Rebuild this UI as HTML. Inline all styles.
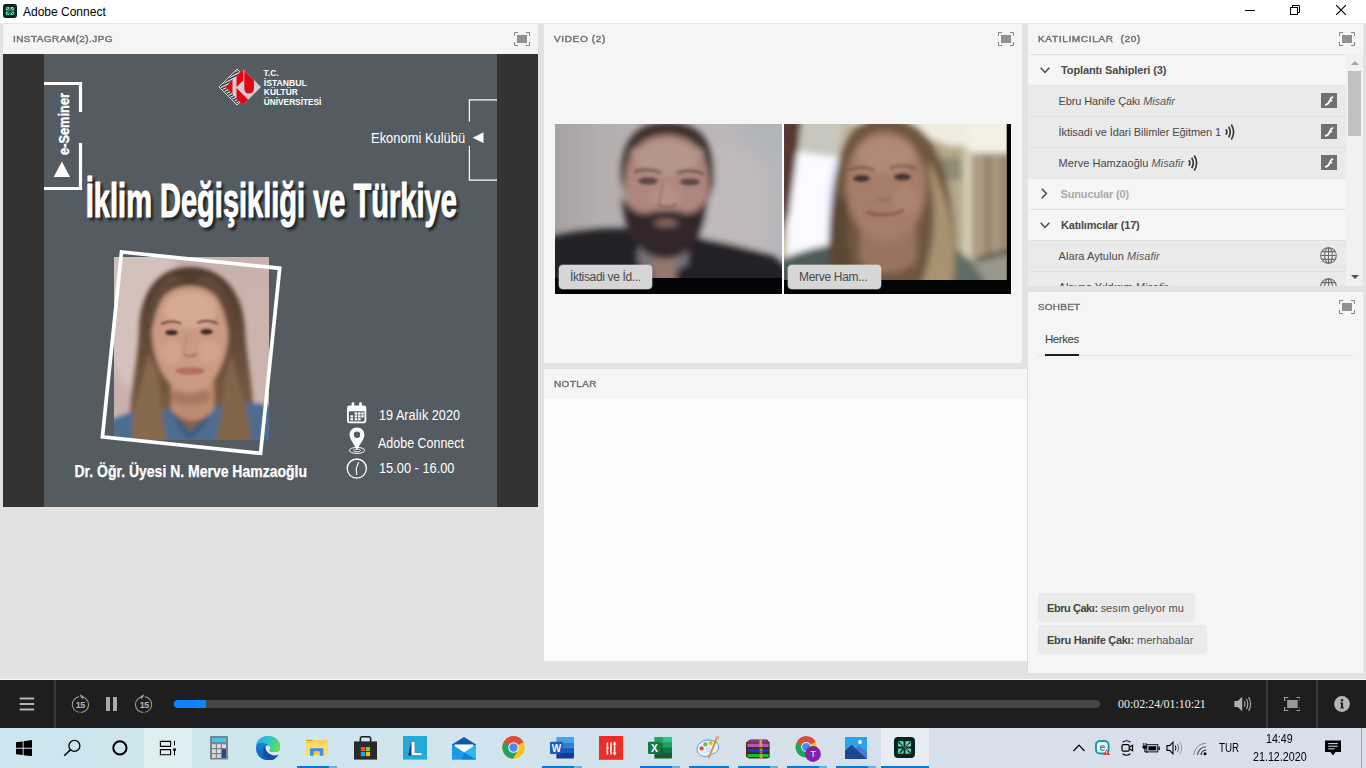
<!DOCTYPE html>
<html lang="tr">
<head>
<meta charset="utf-8">
<title>Adobe Connect</title>
<style>
*{box-sizing:border-box;margin:0;padding:0}
html,body{width:1366px;height:768px;overflow:hidden}
body{position:relative;background:#e2e2e2;font-family:"Liberation Sans",sans-serif;font-size:12px;color:#444}
.abs{position:absolute}
.t{position:absolute;white-space:nowrap;line-height:1;transform-origin:0 0}
#titlebar{left:0;top:0;width:1366px;height:23px;background:#fff}
#tbline{left:0;top:23px;width:1366px;height:1px;background:#e6e6e6}
.pod{position:absolute;background:#f5f5f5;overflow:hidden}
.ph{position:absolute;white-space:nowrap;line-height:1;font-size:10px;font-weight:normal;letter-spacing:1px;color:#747474;-webkit-text-stroke:.5px #727272;transform-origin:0 8.5px;transform:scaleY(.875)}
.fs{position:absolute;width:16px;height:14px}
/* share pod */
#share{left:3px;top:24px;width:535px;height:483px}
#stage{left:0;top:30px;width:535px;height:453px;background:#333}
#slide{left:41px;top:0;width:453px;height:453px;background:#555c61;overflow:hidden}
.w{color:#fff}
/* video pod */
#video{left:544px;top:24px;width:478px;height:339px}
.vid{position:absolute;top:100px;height:170px;background:#000;overflow:hidden}
.vlabel{position:absolute;height:24px;top:141px;background:#d6d6d6;border-radius:4px;box-shadow:0 0 0 1px rgba(255,255,255,.25)}
/* notes */
#notes{left:544px;top:369px;width:483px;height:292px;background:#fbfbfb}
#noteshead{left:0;top:0;width:483px;height:30px;background:#f5f5f5}
/* attendees */
#att{left:1028px;top:24px;width:335px;height:262px}
.row{position:absolute;left:0;width:318px;height:31px;border-top:1px solid transparent}
.row::before{content:"";position:absolute;left:2px;right:0;top:-1px;height:1px;background:#e1e1e1}
.row.u{background:#eaeaea}
.flash{position:absolute;left:293px;top:7px}
.gt{font-size:11px;font-weight:bold;color:#4a4a4a}
.ut{font-size:11px;color:#484848}
.ut i{color:#5a5a5a}
.ct{font-size:11px;color:#505050}
.ct b{color:#444}
/* chat */
#chat{left:1028px;top:292px;width:335px;height:381px}
.bub{position:absolute;left:10px;height:29px;background:#eaeaea;border-radius:4px}
/* player bar */
#pwhite{left:0;top:679px;width:1366px;height:1px;background:#fafafa}
#player{left:0;top:680px;width:1366px;height:48px;background:#1e1e1e}
.vsep{position:absolute;top:0;width:2px;height:48px;background:#383838}
/* taskbar */
#taskbar{left:0;top:728px;width:1366px;height:40px;background:linear-gradient(90deg,#cde5ec 0,#d0e5ed 25%,#d3e2ec 45%,#d6e0eb 62%,#dadfea 100%)}
.ul{position:absolute;top:38px;height:2px;background:#0a78d4}
.ul i{position:absolute;right:0;top:0;width:8px;height:2px;background:#6aaee6}
.ti{position:absolute;top:0;width:48px;height:40px}
</style>
</head>
<body>
<!-- TITLE BAR -->
<div id="titlebar" class="abs">
  <svg class="abs" style="left:3px;top:4px" width="14" height="14" viewBox="0 0 14 14"><rect width="14" height="14" rx="2.4" fill="#05251e"/><rect x="2.8" y="3" width="3.6" height="3.4" fill="#6fe3bd"/><rect x="7.6" y="3" width="3.6" height="3.4" fill="#7be8c4"/><rect x="2.8" y="7.6" width="3.6" height="3.5" fill="#4fd9ad"/><rect x="7.6" y="7.6" width="3.6" height="3.5" fill="#66e0b8"/><path d="M3 3.4L7 7L11 3.4M7 7L11 10.8M7 7Q5.2 8.8 4 10.6" stroke="#05251e" stroke-width=".9" fill="none"/><path d="M4.4 4.8L7 7L9.6 4.8" stroke="#c7f0e0" stroke-width=".4" fill="none"/></svg>
  <span id="ttl" class="t" style="left:23px;top:6px;font-size:12px;color:#000">Adobe Connect</span>
  <svg class="abs" style="left:1245px;top:10px" width="10" height="1"><rect width="10" height="1" fill="#000"/></svg>
  <svg class="abs" style="left:1290px;top:5px" width="10" height="10" viewBox="0 0 10 10"><path d="M2.5 2.5V.5H9.5V7.5H7.5" fill="none" stroke="#000"/><rect x=".5" y="2.5" width="7" height="7" fill="none" stroke="#000"/></svg>
  <svg class="abs" style="left:1336px;top:5px" width="10" height="10" viewBox="0 0 10 10"><path d="M0 0L10 10M10 0L0 10" stroke="#000" stroke-width="1.1"/></svg>
</div>
<div id="tbline" class="abs"></div>

<!-- SHARE POD -->
<div id="share" class="pod">
  <span id="h1" class="ph" style="left:10px;top:10px;letter-spacing:0.43px">INSTAGRAM(2).JPG</span>
  <svg class="fs" style="left:511px;top:8px" width="16" height="14" viewBox="0 0 16 14"><path d="M.5 4V.5H4M12 .5H15.5V4M15.5 10V13.5H12M4 13.5H.5V10" stroke="#858585" fill="none"/><rect x="3" y="3" width="10" height="8" fill="#919191"/></svg>
  <div id="stage" class="abs"><div id="slide" class="abs">
<svg class="abs" style="left:0;top:0" width="453" height="453" viewBox="0 0 453 453" font-family="'Liberation Sans',sans-serif">
<defs>
<filter id="b1" x="-20%" y="-20%" width="140%" height="140%"><feGaussianBlur stdDeviation="1"/></filter>
<filter id="b2" x="-20%" y="-20%" width="140%" height="140%"><feGaussianBlur stdDeviation="2.2"/></filter>
<filter id="b4" x="-20%" y="-20%" width="140%" height="140%"><feGaussianBlur stdDeviation="3"/></filter>
<linearGradient id="hairg" x1="0" y1="0" x2="0" y2="1"><stop offset="0" stop-color="#4f3a2d"/><stop offset=".45" stop-color="#654b38"/><stop offset="1" stop-color="#86684a"/></linearGradient>
<clipPath id="lgc"><path d="M193 16L210 33L193 50L176 33Z"/></clipPath>
<clipPath id="pc"><rect x="70" y="203" width="155" height="183"/></clipPath>
</defs>
<!-- left bracket -->
<path d="M0 29.5H36.5V58M36.5 89V134.5H0" fill="none" stroke="#fff" stroke-width="3.2"/>
<text id="esem" transform="translate(24.6 101) rotate(-90)" font-size="15.5" font-weight="bold" fill="#fff" stroke="#fff" stroke-width=".45" textLength="62" lengthAdjust="spacingAndGlyphs">e-Seminer</text>
<path d="M9.7 123H26L17.9 107.5Z" fill="#fff"/>
<!-- logo -->
<g id="logo">
<path d="M193 15L211 33L193 51L175 33Z" fill="#2e3236" stroke="#e6e6e6" stroke-width=".9"/>
<path d="M174 20.5L200 7.5M174 23.4L200 10.4M174 26.3L200 13.3M174 29.2L200 16.2M174 32.1L200 19.1M174 35.0L200 22.0M174 37.9L200 24.9M174 40.8L200 27.8M174 43.7L200 30.7M174 46.6L200 33.6M174 49.5L200 36.5M174 52.4L200 39.4M174 55.3L200 42.3M174 58.2L200 45.2M174 61.1L200 48.1" stroke="#dedede" stroke-width="1.25" clip-path="url(#lgc)"/>
<path d="M199.2 15.2L217 33L199.2 50.8L181.4 33Z" fill="#d0d0d0"/>
<path d="M181.6 33L188.5 26.1V39.9Z" fill="#e30613"/>
<path d="M192.5 22.1L199.2 15.2L199.4 15.4V26.2L192.5 33Z" fill="#e30613"/>
<path d="M200.3 16.4L209.9 26.1V34.8A4.8 4.8 0 0 1 200.3 34.8Z" fill="#e30613"/>
<path d="M192.5 34L204.2 45.7L199.2 50.8L192.5 44.7Z" fill="#e30613"/>
</g>
<g font-weight="bold" fill="#fff" font-size="8.6">
<text x="219.6" y="21.7" textLength="15" lengthAdjust="spacingAndGlyphs">T.C.</text>
<text x="219.8" y="31.9" textLength="43" lengthAdjust="spacingAndGlyphs">İSTANBUL</text>
<text x="219.8" y="41.2" textLength="34" lengthAdjust="spacingAndGlyphs">KÜLTÜR</text>
<text x="219.8" y="50.8" textLength="57.6" lengthAdjust="spacingAndGlyphs">ÜNİVERSİTESİ</text>
</g>
<!-- right bracket -->
<path d="M453 45.9H425.4V67.5M425.4 92V126.1H453" fill="none" stroke="#fff" stroke-width="1.2"/>
<text x="327" y="89.4" font-size="15" fill="#fff" textLength="94.2" lengthAdjust="spacingAndGlyphs">Ekonomi Kulübü</text>
<path d="M439.5 78.3V89.1L428.6 83.7Z" fill="#fff"/>
<!-- title -->
<text x="44.4" y="166" font-size="48.4" font-weight="bold" fill="#1c2023" stroke="#1c2023" stroke-width="1.1" opacity=".9" filter="url(#b1)" textLength="371" lengthAdjust="spacingAndGlyphs">İklim Değişikliği ve Türkiye</text>
<text id="stitle" x="41.8" y="163.2" font-size="48.4" font-weight="bold" fill="#fff" stroke="#fff" stroke-width="1.1" stroke-linejoin="round" textLength="371" lengthAdjust="spacingAndGlyphs">İklim Değişikliği ve Türkiye</text>
<!-- photo -->
<g clip-path="url(#pc)">
<rect x="70" y="203" width="155" height="183" fill="#c9b2ad"/>
<g filter="url(#b4)">
<ellipse cx="100" cy="260" rx="40" ry="80" fill="#d3c1bc"/>
<ellipse cx="212" cy="300" rx="20" ry="70" fill="#cbb3ae"/>
</g>
<g filter="url(#b2)">
<!-- hair back -->
<path d="M146 213C112 213 96 240 95 276C94 312 83 345 86 392H209C213 345 203 312 201 276C200 240 180 213 146 213Z" fill="url(#hairg)"/>
<!-- shirt -->
<path d="M66 366Q100 352 128 356L146 378L170 352Q200 346 229 352V392H66Z" fill="#4d6c91"/>
<path d="M128 356L146 378L170 352L160 372L146 386L134 374Z" fill="#3f5a7c"/>
<!-- neck -->
<path d="M127 318H170V356Q148 378 127 356Z" fill="#bd8b72"/>
<ellipse cx="147" cy="343" rx="20" ry="8" fill="#a87860"/>
<!-- face -->
<path d="M146 232C119 232 107 255 108 281C109 311 126 339 146 339C167 339 183 311 184 281C185 255 173 232 146 232Z" fill="#cb9a82"/>
<ellipse cx="146" cy="256" rx="26" ry="18" fill="#d6aa92"/>
<ellipse cx="128" cy="298" rx="11" ry="12" fill="#d2a28a"/><ellipse cx="165" cy="298" rx="11" ry="12" fill="#d2a28a"/>
<!-- hairline strands -->
<path d="M141 226C122 232 110 252 107 286C100 270 104 236 128 220Z" fill="#60483a"/>
<path d="M150 226C170 232 182 252 185 286C192 270 188 236 164 220Z" fill="#60483a"/>
<!-- front strands -->
<path d="M104 300C100 330 86 356 88 392H124C118 366 116 340 114 318Z" fill="#87694c"/>
<path d="M188 300C192 330 208 356 207 392H170C178 366 180 340 182 318Z" fill="#826549"/>
</g>
<g filter="url(#b1)">
<ellipse cx="127.5" cy="278.6" rx="6.2" ry="2.7" fill="#3e2a22"/>
<ellipse cx="162.5" cy="277.8" rx="6.2" ry="2.7" fill="#3e2a22"/>
<path d="M117 270Q127 265 137 269.5M153 269Q163 264.5 174 269.5" stroke="#5f4234" stroke-width="1.9" fill="none"/>
<ellipse cx="146" cy="317" rx="14.5" ry="3.8" fill="#b76d62"/>
<path d="M139 300Q146 304.5 153 300" stroke="#a36e5a" stroke-width="2" fill="none"/>
<path d="M143 280Q141 292 140 298" stroke="#bb8a73" stroke-width="1.6" fill="none"/>
</g>
</g>
<!-- frame -->
<rect x="67.6" y="205.6" width="159" height="186" fill="none" stroke="#fff" stroke-width="3.7" transform="rotate(5.9 147.1 298.1)"/>
<!-- name -->
<text x="30.5" y="422.6" font-size="16.5" font-weight="bold" fill="#fff" stroke="#fff" stroke-width=".25" textLength="232.5" lengthAdjust="spacingAndGlyphs">Dr. Öğr. Üyesi N. Merve Hamzaoğlu</text>
<!-- info -->
<g font-size="15" fill="#fff">
<text x="335" y="366" textLength="81" lengthAdjust="spacingAndGlyphs">19 Aralık 2020</text>
<text x="334" y="393.6" textLength="86" lengthAdjust="spacingAndGlyphs">Adobe Connect</text>
<text x="335" y="418.6" textLength="75.5" lengthAdjust="spacingAndGlyphs">15.00 - 16.00</text>
</g>
<!-- calendar icon -->
<g fill="#fff">
<rect x="303" y="351.5" width="19.3" height="17.7" rx="2.4"/>
<rect x="307.6" y="348.2" width="2.6" height="6" rx="1.2"/><rect x="315.2" y="348.2" width="2.6" height="6" rx="1.2"/>
</g>
<rect x="304.8" y="357.2" width="15.7" height="10.2" rx="1" fill="#555c61"/>
<g fill="#fff"><rect x="310.6" y="358.4" width="2.6" height="2.2"/><rect x="314" y="358.4" width="2.6" height="2.2"/><rect x="317.3" y="358.4" width="2.4" height="2.2"/>
<rect x="306.4" y="361.3" width="2.6" height="2.2"/><rect x="310.6" y="361.3" width="2.6" height="2.2"/><rect x="314" y="361.3" width="2.6" height="2.2"/><rect x="317.3" y="361.3" width="2.4" height="2.2"/>
<rect x="306.4" y="364.2" width="2.6" height="2.2"/><rect x="310.6" y="364.2" width="2.6" height="2.2"/><rect x="314" y="364.2" width="2.6" height="2.2"/></g>
<!-- pin icon -->
<ellipse cx="313" cy="396.4" rx="7.6" ry="3" fill="none" stroke="#fff" stroke-width="1"/>
<ellipse cx="313" cy="396.4" rx="3.6" ry="1.3" fill="none" stroke="#fff" stroke-width=".8"/>
<path d="M313 373.6C308.4 373.6 305.6 377 305.6 380.8C305.6 385.5 310.5 390.5 313 396.2C315.5 390.5 320.4 385.5 320.4 380.8C320.4 377 317.6 373.6 313 373.6ZM313 377.6A3.2 3.2 0 1 1 313 384A3.2 3.2 0 1 1 313 377.6Z" fill="#fff" fill-rule="evenodd"/>
<!-- clock icon -->
<circle cx="312.8" cy="414.6" r="9.6" fill="none" stroke="#fff" stroke-width="1.3"/>
<path d="M314.6 408L312.2 414.8L312.8 421" fill="none" stroke="#fff" stroke-width="1.1"/>
</svg>
</div></div>
</div>

<!-- VIDEO POD -->
<div id="video" class="pod">
  <span id="h2" class="ph" style="left:10px;top:10px;letter-spacing:0.65px">VIDEO (2)</span>
  <svg class="fs" style="left:454px;top:8px" width="16" height="14" viewBox="0 0 16 14"><path d="M.5 4V.5H4M12 .5H15.5V4M15.5 10V13.5H12M4 13.5H.5V10" stroke="#858585" fill="none"/><rect x="3" y="3" width="10" height="8" fill="#919191"/></svg>
  <div class="vid" style="left:11px;width:227px">
  <svg class="abs" style="left:0;top:0" width="227" height="170" viewBox="555 124 227 170">
  <defs><filter id="v3" x="-20%" y="-20%" width="140%" height="140%"><feGaussianBlur stdDeviation="3"/></filter><filter id="v9" x="-50%" y="-50%" width="200%" height="200%"><feGaussianBlur stdDeviation="9"/></filter><filter id="v15" x="-20%" y="-20%" width="140%" height="140%"><feGaussianBlur stdDeviation="1.6"/></filter>
  <linearGradient id="wall1" x1="0" x2="1" y1="0" y2="0"><stop offset="0" stop-color="#a7a1a1"/><stop offset=".2" stop-color="#b4aeae"/><stop offset=".7" stop-color="#bdb7b8"/><stop offset="1" stop-color="#b6b6bb"/></linearGradient>
  <clipPath id="c1"><rect x="555" y="124" width="227" height="154"/></clipPath></defs>
  <rect x="555" y="124" width="227" height="170" fill="#050508"/>
  <g clip-path="url(#c1)">
  <rect x="555" y="124" width="227" height="155" fill="url(#wall1)"/>
  <g filter="url(#v3)">
  <g filter="url(#v9)"><ellipse cx="735" cy="205" rx="34" ry="60" fill="#c1baba"/>
  <ellipse cx="775" cy="128" rx="40" ry="30" fill="#b0b5ba"/></g>
  <!-- shirt -->
  <path d="M545 238Q580 228 622 228L700 238Q740 244 774 256L790 270V290H545Z" fill="#232428"/>
  <!-- collar / tee -->
  <path d="M638 246H688V264Q662 282 638 264Z" fill="#77737a"/>
  <path d="M652 250H676V282H652Z" fill="#94786f"/>
  <!-- hair -->
  <path d="M667 122C630 122 620 148 621 180L626 196L631 150Q667 130 703 150L709 200L714 184C716 148 706 122 667 122Z" fill="#3a2e2b"/>
  <!-- face -->
  <path d="M667 135C638 135 625 156 625 186C627 216 643 240 667 242C691 240 707 216 709 186C709 156 696 135 667 135Z" fill="#ad877d"/>
  <ellipse cx="667" cy="158" rx="31" ry="17" fill="#b8958a"/>
  <ellipse cx="666" cy="198" rx="14" ry="13" fill="#b79085"/>
  <!-- beard -->
  <path d="M622 194C622 238 644 259 665 259C688 259 707 238 708 194C704 208 694 215 684 213C678 209 655 209 649 213C638 215 627 208 622 194Z" fill="#30262a"/>
  <ellipse cx="666" cy="223" rx="12" ry="3.6" fill="#8f6c66"/>
  </g>
  <g filter="url(#v15)">
  <ellipse cx="648" cy="181" rx="10" ry="3.4" fill="#5c4846"/><ellipse cx="690" cy="182" rx="10" ry="3.4" fill="#5c4846"/>
  <path d="M634 172Q648 167 661 173M677 173Q690 168 704 174" stroke="#4a3a3890" stroke-width="3" fill="none"/>
  <path d="M657 204Q666 211 677 204" stroke="#8a675f" stroke-width="2.6" fill="none"/>
  <path d="M663 182Q660 198 659 204" stroke="#9a776c" stroke-width="2" fill="none"/>
  </g>
  </g>
  </svg>
  <div class="vlabel" style="left:4px;width:93px"><span id="vl1" class="t" style="left:11px;top:6px;font-size:12px;letter-spacing:-.35px;color:#4a4a4a">İktisadi ve İd...</span></div>
  </div>
  <div class="vid" style="left:240px;width:227px">
  <svg class="abs" style="left:0;top:0" width="227" height="170" viewBox="784 124 227 170">
  <defs><clipPath id="c2"><rect x="784" y="124" width="222.5" height="156"/></clipPath>
  <linearGradient id="cur" x1="0" x2="1" y1="0" y2="0"><stop offset="0" stop-color="#9d8a74"/><stop offset=".2" stop-color="#b5a48c"/><stop offset=".4" stop-color="#8f7b66"/><stop offset=".6" stop-color="#b3a188"/><stop offset=".8" stop-color="#927e69"/><stop offset="1" stop-color="#ac9a82"/></linearGradient></defs>
  <rect x="784" y="124" width="227" height="170" fill="#040404"/>
  <g clip-path="url(#c2)">
  <rect x="784" y="124" width="223" height="157" fill="#bdb197"/>
  <g filter="url(#v3)">
  <!-- top wall / ceiling -->
  <path d="M800 118H1012V150L968 152L940 142L900 126Z" fill="#efecdf"/>
  <rect x="968" y="118" width="44" height="36" fill="#f3f1e6"/>
  <!-- alcove -->
  <rect x="934" y="146" width="32" height="110" fill="#b4a98b"/>
  <rect x="940" y="158" width="22" height="22" fill="#8f8a74"/>
  <rect x="963" y="150" width="9" height="108" fill="#d6ceb6"/>
  <!-- curtain -->
  <rect x="972" y="153" width="40" height="103" fill="url(#cur)"/>
  <!-- sofa -->
  <path d="M975 258L1012 250V290H975Z" fill="#97978a"/>
  <path d="M975 260L1012 251" stroke="#4a4038" stroke-width="4"/>
  <!-- window frame + wall left-top -->
  <path d="M800 118H846L836 160H800Z" fill="#c8c7be"/>
  <!-- window -->
  <path d="M789 156H835V248L786 262Z" fill="#fdfdff"/>
  <path d="M790 150L838 158V252L786 262Z" fill="#fbfbff"/>
  <ellipse cx="836" cy="205" rx="9" ry="46" fill="#e8ecff"/>
  <!-- dark band left -->
  <path d="M778 118H802L789 214L778 250Z" fill="#573830"/>
  <!-- shirt -->
  <path d="M778 262Q800 248 850 242H925Q958 246 972 262L990 290H778Z" fill="#5d6d66"/>
  <path d="M778 262Q800 250 830 246V290H778Z" fill="#4e5c58"/>
  <!-- hair -->
  <path d="M882 116C850 118 838 150 832 196C828 236 826 262 834 288H952C958 262 956 236 952 208C946 160 930 116 882 116Z" fill="#705741"/>
  <path d="M928 160C948 196 960 240 952 288H920C934 252 938 212 930 180Z" fill="#a8936f"/>
  <path d="M834 196C828 230 826 262 834 288H858C848 262 846 230 848 200Z" fill="#5c4635"/>
  <!-- neck -->
  <path d="M860 226H916V262Q888 284 860 262Z" fill="#997560"/>
  <!-- face -->
  <path d="M884 132C858 132 845 160 846 190C848 220 864 241 886 241C908 241 924 220 926 190C927 160 912 132 884 132Z" fill="#a57d67"/>
  <ellipse cx="886" cy="156" rx="28" ry="18" fill="#b08a73"/>
  <ellipse cx="905" cy="200" rx="12" ry="14" fill="#ae866f"/>
  </g>
  <g filter="url(#v15)">
  <ellipse cx="861.5" cy="178.5" rx="8.4" ry="3.3" fill="#43332f"/><ellipse cx="902.5" cy="177" rx="8.4" ry="3.3" fill="#43332f"/>
  <path d="M849 170Q861 164.5 874 170M890 168Q902 163 916 169" stroke="#5a433a90" stroke-width="2.6" fill="none"/>
  <path d="M866 212Q884 219 904 210" stroke="#8e584e" stroke-width="3" fill="none"/>
  <path d="M877 198Q884 202.5 892 198" stroke="#93695a" stroke-width="2.2" fill="none"/>
  </g>
  </g>
  </svg>
  <div class="vlabel" style="left:4px;width:93px"><span id="vl2" class="t" style="left:11px;top:6px;font-size:12px;letter-spacing:-.3px;color:#4a4a4a">Merve Ham...</span></div>
  </div>
  <div class="abs" style="left:238px;top:100px;width:2px;height:170px;background:#fdfdfd"></div>

</div>

<!-- NOTES POD -->
<div id="notes" class="pod"><div id="noteshead" class="abs"></div>
  <span id="h3" class="ph" style="left:10px;top:10px;letter-spacing:0.4px">NOTLAR</span></div>
<div class="abs" style="left:1027px;top:369px;width:1px;height:304px;background:#dcdcdc"></div>

<!-- ATTENDEES POD -->
<div id="att" class="pod">
  <span id="h4" class="ph" style="left:10px;top:10px;letter-spacing:0.67px">KATILIMCILAR&nbsp; (20)</span>
  <svg class="fs" style="left:311px;top:8px" width="16" height="14" viewBox="0 0 16 14"><path d="M.5 4V.5H4M12 .5H15.5V4M15.5 10V13.5H12M4 13.5H.5V10" stroke="#858585" fill="none"/><rect x="3" y="3" width="10" height="8" fill="#919191"/></svg>
  <div class="abs" style="left:0;top:30px;width:318px;height:232px;overflow:hidden">
    <div class="row" style="top:0"><svg class="abs" style="left:12px;top:12px" width="10" height="7" viewBox="0 0 10 7"><path d="M.7 .8L5 5.4L9.3 .8" fill="none" stroke="#4a4a4a" stroke-width="1.5"/></svg><span id="g1" class="t gt" style="left:33px;top:10px;letter-spacing:-0.12px">Toplantı Sahipleri (3)</span></div>
    <div class="row u" style="top:31px"><span id="u1" class="t ut" style="left:30.6px;top:10px;letter-spacing:-0.13px">Ebru Hanife Çakı <i>Misafir</i></span><svg class="flash" width="16" height="15" viewBox="0 0 16 15"><rect width="16" height="15" fill="#707070"/><path d="M3.8 11.2Q6.6 10.8 7.9 7.4Q9.4 3.4 12.3 3L12.1 4.9Q10.7 5.1 10 6.8H11.4L11.1 8.4H9.4Q7.9 12.3 4.1 12.7Z" fill="#fff"/></svg></div>
    <div class="row u" style="top:62px"><span id="u2" class="t ut" style="left:30.6px;top:10px;letter-spacing:-0.07px">İktisadi ve İdari Bilimler Eğitmen 1</span><svg class="abs" style="left:197px;top:7px" width="10" height="16" viewBox="0 0 10 16"><path d="M1 5.3Q2.7 8 1 10.7M3.7 2.8Q6.8 8 3.7 13.2M6.3 .5Q10.9 8 6.3 15.5" fill="none" stroke="#3a3a3a" stroke-width="1.7"/></svg><svg class="flash" width="16" height="15" viewBox="0 0 16 15"><rect width="16" height="15" fill="#707070"/><path d="M3.8 11.2Q6.6 10.8 7.9 7.4Q9.4 3.4 12.3 3L12.1 4.9Q10.7 5.1 10 6.8H11.4L11.1 8.4H9.4Q7.9 12.3 4.1 12.7Z" fill="#fff"/></svg></div>
    <div class="row u" style="top:93px"><span id="u3" class="t ut" style="left:30.6px;top:10px;letter-spacing:0.04px">Merve Hamzaoğlu <i>Misafir</i></span><svg class="abs" style="left:159.5px;top:7px" width="10" height="16" viewBox="0 0 10 16"><path d="M1 5.3Q2.7 8 1 10.7M3.7 2.8Q6.8 8 3.7 13.2M6.3 .5Q10.9 8 6.3 15.5" fill="none" stroke="#3a3a3a" stroke-width="1.7"/></svg><svg class="flash" width="16" height="15" viewBox="0 0 16 15"><rect width="16" height="15" fill="#707070"/><path d="M3.8 11.2Q6.6 10.8 7.9 7.4Q9.4 3.4 12.3 3L12.1 4.9Q10.7 5.1 10 6.8H11.4L11.1 8.4H9.4Q7.9 12.3 4.1 12.7Z" fill="#fff"/></svg></div>
    <div class="row" style="top:124px"><svg class="abs" style="left:13px;top:9px" width="7" height="11" viewBox="0 0 7 11"><path d="M.8 .7L5.4 5.5L.8 10.3" fill="none" stroke="#4a4a4a" stroke-width="1.5"/></svg><span id="g2" class="t gt" style="left:32.5px;top:10px;letter-spacing:-0.14px;color:#aaa">Sunucular (0)</span></div>
    <div class="row" style="top:155px"><svg class="abs" style="left:12px;top:12px" width="10" height="7" viewBox="0 0 10 7"><path d="M.7 .8L5 5.4L9.3 .8" fill="none" stroke="#4a4a4a" stroke-width="1.5"/></svg><span id="g3" class="t gt" style="left:33px;top:10px;letter-spacing:-0.2px">Katılımcılar (17)</span></div>
    <div class="row u" style="top:186px"><span id="u4" class="t ut" style="left:30.6px;top:10px;letter-spacing:0.05px">Alara Aytulun <i>Misafir</i></span><svg class="abs" style="left:292px;top:6px" width="17" height="17" viewBox="0 0 17 17"><g fill="none" stroke="#6c6c6c" stroke-width="1.1"><circle cx="8.5" cy="8.5" r="7.8"/><path d="M8.5 .7V16.3M.7 8.5H16.3M1.9 4.6H15.1M1.9 12.4H15.1"/><ellipse cx="8.5" cy="8.5" rx="3.9" ry="7.8"/></g></svg></div>
    <div class="row u" style="top:217px"><span id="u5" class="t ut" style="left:30.6px;top:10px;letter-spacing:-0.03px">Alayna Yıldırım <i>Misafir</i></span><svg class="abs" style="left:292px;top:6px" width="17" height="17" viewBox="0 0 17 17"><g fill="none" stroke="#6c6c6c" stroke-width="1.1"><circle cx="8.5" cy="8.5" r="7.8"/><path d="M8.5 .7V16.3M.7 8.5H16.3M1.9 4.6H15.1M1.9 12.4H15.1"/><ellipse cx="8.5" cy="8.5" rx="3.9" ry="7.8"/></g></svg></div>
  </div>
  <div class="abs" style="left:318px;top:30px;width:17px;height:232px;background:#f1f1f1">
    <svg class="abs" style="left:4.5px;top:7px" width="8" height="4" viewBox="0 0 8 4"><path d="M0 4L4 0L8 4Z" fill="#a3a3a3"/></svg>
    <div class="abs" style="left:2px;top:17px;width:13px;height:65px;background:#c1c1c1"></div>
    <svg class="abs" style="left:4.6px;top:221px" width="8" height="4" viewBox="0 0 8 4"><path d="M0 0H8L4 4Z" fill="#505050"/></svg>
  </div>

</div>

<!-- CHAT POD -->
<div id="chat" class="pod">
  <span id="h5" class="ph" style="left:10px;top:10px;letter-spacing:0.2px">SOHBET</span>
  <svg class="fs" style="left:311px;top:8px" width="16" height="14" viewBox="0 0 16 14"><path d="M.5 4V.5H4M12 .5H15.5V4M15.5 10V13.5H12M4 13.5H.5V10" stroke="#858585" fill="none"/><rect x="3" y="3" width="10" height="8" fill="#919191"/></svg>
  <span id="hk" class="t" style="left:17px;top:42px;font-size:11.5px;letter-spacing:-.45px;color:#3a3a3a">Herkes</span>
  <div class="abs" style="left:10px;top:63px;width:315px;height:1px;background:#e4e4e4"></div>
  <div class="abs" style="left:17px;top:62px;width:34px;height:2px;background:#1e1e1e"></div>
  <div class="bub" style="top:301px;width:157px"><span id="c1" class="t ct" style="left:9px;top:10px;letter-spacing:-.04px"><b style="letter-spacing:-.44px">Ebru Çakı:</b> sesım gelıyor mu</span></div>
  <div class="bub" style="top:333px;width:169px"><span id="c2" class="t ct" style="left:9px;top:10px;letter-spacing:.09px"><b style="letter-spacing:-.29px">Ebru Hanife Çakı:</b> merhabalar</span></div>

</div>

<!-- PLAYER BAR -->
<div id="pwhite" class="abs"></div>
<div id="player" class="abs">
  <div class="vsep" style="left:54px"></div><div class="vsep" style="left:1266px"></div><div class="vsep" style="left:1316px"></div>
  <svg class="abs" style="left:19px;top:17px" width="16" height="14" viewBox="0 0 16 14"><path d="M.7 1.6H15.2M.7 7H15.2M.7 12.4H15.2" stroke="#b4b4b4" stroke-width="2"/></svg>
  <svg class="abs" style="left:70px;top:13px" width="20" height="22" viewBox="0 0 20 22" font-family="'Liberation Sans',sans-serif"><path d="M9.2 19.3A7.8 7.8 0 0 1 9.2 3.8M10.8 3.8A7.8 7.8 0 0 1 10.8 19.4" fill="none" stroke="#9c9c9c" stroke-width="1.05"/><path d="M13.2 4L10.4 2L12.8 6" fill="none" stroke="#9c9c9c" stroke-width="1.1"/><text x="10.2" y="14.6" text-anchor="middle" font-size="9" font-weight="bold" fill="#b4b4b4" letter-spacing="-.5">15</text></svg>
  <div class="abs" style="left:106px;top:17px;width:4.3px;height:14.2px;background:#a9a9a9"></div><div class="abs" style="left:113px;top:17px;width:4.3px;height:14.2px;background:#a9a9a9"></div>
  <svg class="abs" style="left:134px;top:13px" width="20" height="22" viewBox="0 0 20 22" font-family="'Liberation Sans',sans-serif"><path d="M9.2 19.4A7.8 7.8 0 0 1 9.2 3.8M10.8 3.8A7.8 7.8 0 0 1 10.8 19.3" fill="none" stroke="#9c9c9c" stroke-width="1.05"/><path d="M6.8 4L9.6 2L7.2 6" fill="none" stroke="#9c9c9c" stroke-width="1.1"/><text x="10.2" y="14.6" text-anchor="middle" font-size="9" font-weight="bold" fill="#b4b4b4" letter-spacing="-.5">15</text></svg>
  <div class="abs" style="left:174px;top:20px;width:926px;height:8px;border-radius:4px;background:#454545"></div>
  <div class="abs" style="left:174px;top:20px;width:32px;height:8px;border-radius:4px 0 0 4px;background:#0d84ff"></div>
  <span id="tm" class="t" style="left:1118px;top:18px;font-family:'Liberation Serif',serif;font-size:12px;letter-spacing:-.05px;color:#ededed">00:02:24/01:10:21</span>
  <svg class="abs" style="left:1234px;top:16px" width="18" height="16" viewBox="0 0 18 16"><path d="M.4 5H3.6L8.2 .8V15.2L3.6 11H.4Z" fill="#b0b0b0"/><path d="M10.2 5.2Q11.9 8 10.2 10.8M12.4 3Q15.2 8 12.4 13M14.6 1Q18.6 8 14.6 15" fill="none" stroke="#a8a8a8" stroke-width="1.2"/></svg>
  <svg class="abs" style="left:1283.5px;top:17px" width="16.8" height="14" viewBox="0 0 18 15"><path d="M.6 4.4V.6H4.6M13.4 .6H17.4V4.4M17.4 10.6V14.4H13.4M4.6 14.4H.6V10.6" stroke="#a2a2a2" stroke-width="1.2" fill="none"/><rect x="3.4" y="3.2" width="11.2" height="8.6" fill="#999"/></svg>
  <svg class="abs" style="left:1334px;top:16px" width="16" height="16" viewBox="0 0 16 16"><circle cx="8" cy="8" r="7.9" fill="#b6b6b6"/><circle cx="8" cy="4.3" r="1.25" fill="#1e1e1e"/><path d="M6.2 6.6H9.1V11.4H10V12.5H6.1V11.4H7V7.7H6.2Z" fill="#1e1e1e"/></svg>
</div>

<!-- TASKBAR -->
<div id="taskbar" class="abs">
  <div class="abs" style="left:144px;top:0;width:48px;height:40px;background:rgba(255,255,255,.36)"></div>
  <div class="abs" style="left:881px;top:0;width:48px;height:40px;background:rgba(255,255,255,.42)"></div>
  <!-- start -->
  <svg class="abs" style="left:15.8px;top:11.6px" width="16.6" height="16.4" viewBox="0 0 16.6 16.4"><path d="M0 2.3L6.7 1.4V7.8H0ZM7.6 1.25L16.6 0V7.8H7.6ZM0 8.7H6.7V15.1L0 14.2ZM7.6 8.7H16.6V16.4L7.6 15.2Z" fill="#000"/></svg>
  <!-- search -->
  <svg class="abs" style="left:63px;top:11px" width="19" height="18" viewBox="0 0 19 18"><circle cx="11.4" cy="6.9" r="5.5" fill="none" stroke="#000" stroke-width="1.3"/><path d="M7.4 10.9L1.2 16.7" stroke="#000" stroke-width="1.5"/></svg>
  <!-- cortana -->
  <svg class="abs" style="left:111px;top:11px" width="18" height="18" viewBox="0 0 18 18"><circle cx="8.9" cy="8.9" r="6.6" fill="none" stroke="#000" stroke-width="2"/></svg>
  <!-- task view -->
  <svg class="abs" style="left:159px;top:11.5px" width="18" height="16" viewBox="0 0 18 16"><path d="M1.4 1.4H11.6V6.4H1.4ZM1.4 9.6H11.6V14.8H1.4Z" fill="none" stroke="#000" stroke-width="1.1"/><path d="M15.5 .9V5.4M15.5 11V15.4" stroke="#000" stroke-width="1"/><rect x="14.2" y="8.4" width="2.6" height="2.6" fill="#000"/></svg>
  <!-- calculator -->
  <svg class="abs" style="left:210px;top:8px" width="18" height="24" viewBox="0 0 18 24"><rect width="18" height="23.6" rx="1.2" fill="#7c828a"/><rect x="2" y="2" width="14" height="4.2" fill="#41c9f2"/><g fill="#d9dce0"><rect x="2" y="8.2" width="3.8" height="3.8"/><rect x="7" y="8.2" width="3.8" height="3.8"/><rect x="12" y="8.2" width="4" height="3.8"/><rect x="2" y="13.2" width="3.8" height="3.8"/><rect x="7" y="13.2" width="3.8" height="3.8"/><rect x="2" y="18.2" width="3.8" height="3.6"/><rect x="7" y="18.2" width="3.8" height="3.6"/></g><rect x="12" y="13.2" width="4" height="8.6" fill="#1b4b8a"/></svg>
  <!-- edge -->
  <svg class="abs" style="left:255.9px;top:7.6px" width="24.4" height="24.4" viewBox="0 0 24.4 24.4"><defs><linearGradient id="eg1" x1="0" y1="0" x2="0" y2="1"><stop offset="0" stop-color="#1f95e4"/><stop offset="1" stop-color="#0a5cbc"/></linearGradient><linearGradient id="eg2" x1="0" y1=".3" x2="1" y2=".5"><stop offset="0" stop-color="#2aaef0"/><stop offset=".5" stop-color="#2fc4c6"/><stop offset=".8" stop-color="#4fd77a"/><stop offset="1" stop-color="#66e348"/></linearGradient></defs><circle cx="12.2" cy="12.2" r="12.2" fill="url(#eg1)"/><path d="M8.2 11.3C7 13.5 6.8 16 7.5 18.5C8.3 21.3 10.5 23.6 13 24.3C17 24.7 20.5 22.3 22.3 18.5C20.5 19.6 18 19.8 15.5 18.8C12.5 17.6 10.2 15.2 9.6 12.4C9.4 11.2 8.8 10.8 8.2 11.3Z" fill="#0e4f9f"/><path d="M12.9 9.4C10.8 8.9 9.3 10.4 9.5 12.4C10 15.3 12.5 17.6 15.5 18.8C18 19.8 20.5 19.6 22.3 18.5L24.4 19V13L22.3 15.2C20 16.3 16 16.2 14.3 15.5C13.2 15 13.6 14 14.2 13.2C15.2 11.8 14.4 10.2 12.9 9.4Z" fill="#d8e9f1"/><path d="M.2 8.5C1.5 3.5 6.5 0 12.2 0C19 0 24.4 5 24.4 10.5C24.4 13 23.5 14.5 22.3 15.2C20 16.3 16 16.2 14.3 15.5C13.2 15 13.6 14 14.2 13.2C15.2 11.8 14.4 10.2 12.9 9.4C11 8 8 6.6 4.5 6.7C2.8 6.8 1.2 7.6 .2 8.5Z" fill="url(#eg2)"/></svg>
  <!-- explorer -->
  <svg class="abs" style="left:306px;top:11px" width="22" height="18" viewBox="0 0 22 18"><path d="M0 .8H6.4L7.6 2.6H0Z" fill="#e0a116"/><path d="M0 2H7.4L8.6 1H21.4V15.6H0Z" fill="#f9cf57"/><path d="M0 4.4H21.4V15.6H0Z" fill="#fbdb72"/><path d="M4 16.8V10.4Q4 9.2 5.2 9.2H16.2Q17.4 9.2 17.4 10.4V16.8H13.6V12.4H7.8V16.8Z" fill="#3f8fdb"/><rect x="7.8" y="12.4" width="5.8" height="3.2" fill="#f6c944"/></svg>
  <!-- store -->
  <svg class="abs" style="left:354px;top:8px" width="23" height="24" viewBox="0 0 23 24"><path d="M6.4 6V2.6Q6.4 .8 8.2 .8H14.8Q16.6 .8 16.6 2.6V6" fill="none" stroke="#1f1f1f" stroke-width="1.6"/><path d="M0 5.4H23V23.6H0Z" fill="#2a2a2a"/><rect x="6.8" y="11" width="4.2" height="4.2" fill="#f1511b"/><rect x="11.8" y="11" width="4.2" height="4.2" fill="#80cc28"/><rect x="6.8" y="16" width="4.2" height="4.2" fill="#00adef"/><rect x="11.8" y="16" width="4.2" height="4.2" fill="#fbbc09"/></svg>
  <!-- L -->
  <svg class="abs" style="left:403px;top:8px" width="24" height="24" viewBox="0 0 24 24" font-family="'Liberation Sans',sans-serif"><rect width="24" height="23.6" fill="#25a9d8"/><path d="M8.4 4.6L5.2 19.6H9Z" fill="#12306e"/><text x="7.2" y="18.6" font-size="19" font-weight="bold" fill="#fff">L</text></svg>
  <!-- mail -->
  <svg class="abs" style="left:452px;top:8.6px" width="24" height="23" viewBox="0 0 24 23"><path d="M0 7.4L12 0L24 7.4V10H0Z" fill="#0c59ab"/><path d="M2.6 7.4H21.4V16H2.6Z" fill="#f4f6f8"/><path d="M0 7.6L12 15.4L24 7.6V22.4H0Z" fill="#2fb7ef"/><path d="M0 7.6L12 15.4L24 22.4H0Z" fill="#1b9be4"/><path d="M12 15.4L24 22.4H10Z" fill="#1682d2"/></svg>
  <!-- chrome -->
  <svg class="abs" style="left:501.6px;top:8.4px" width="23" height="23" viewBox="0 0 23 23"><circle cx="11.5" cy="11.5" r="11.2" fill="#fbc116"/><path d="M11.5 11.5L1.8 5.9A11.2 11.2 0 0 1 21.2 5.9Z" fill="#dd4b3e"/><path d="M1.8 5.9A11.2 11.2 0 0 0 11 22.7L16 14.2L11.5 11.5Z" fill="#1da362"/><path d="M11.5 6.4H21.4A11.2 11.2 0 0 0 1.8 5.9L6.6 9.4Z" fill="#dd4b3e"/><circle cx="11.5" cy="11.5" r="5.3" fill="#f4f4f4"/><circle cx="11.5" cy="11.5" r="4.2" fill="#4a8af4"/></svg>
  <!-- word -->
  <svg class="abs" style="left:550px;top:9px" width="24" height="22" viewBox="0 0 24 22" font-family="'Liberation Sans',sans-serif"><path d="M6.4 0H23Q24 0 24 1V5.4H6.4Z" fill="#41a5ee"/><rect x="6.4" y="5.4" width="17.6" height="5.3" fill="#2b7cd3"/><rect x="6.4" y="10.7" width="17.6" height="5.3" fill="#185abd"/><path d="M6.4 16H24V20.4Q24 21.4 23 21.4H6.4Z" fill="#103f91"/><rect x="0" y="4.8" width="12.8" height="12.2" rx="1" fill="#185abd"/><text x="6.4" y="14.6" text-anchor="middle" font-size="10" font-weight="bold" fill="#fff">W</text></svg>
  <!-- red -->
  <svg class="abs" style="left:599px;top:8px" width="24" height="24" viewBox="0 0 24 24"><rect width="24" height="23.8" fill="#ee2e24"/><path d="M8.4 6.4V18.6M12 6.4V18.6M15.6 6.4V18.6" stroke="#fff" stroke-width="1.5"/><path d="M7 12H9.8M14.2 8.8L15.6 6.4L17 8.8M14.2 16.2L15.6 18.6L17 16.2" stroke="#fff" stroke-width="1.1" fill="none"/></svg>
  <!-- excel -->
  <svg class="abs" style="left:648px;top:9px" width="24" height="22" viewBox="0 0 24 22" font-family="'Liberation Sans',sans-serif"><path d="M6.4 0H23Q24 0 24 1V5.4H6.4Z" fill="#21a366"/><rect x="15.2" y="0" width="8.8" height="5.4" fill="#33c481"/><rect x="6.4" y="5.4" width="17.6" height="5.3" fill="#107c41"/><rect x="15.2" y="5.4" width="8.8" height="5.3" fill="#21a366"/><rect x="6.4" y="10.7" width="17.6" height="5.3" fill="#185c37"/><rect x="15.2" y="10.7" width="8.8" height="5.3" fill="#107c41"/><path d="M6.4 16H24V20.4Q24 21.4 23 21.4H6.4Z" fill="#185c37"/><rect x="0" y="4.8" width="12.8" height="12.2" rx="1" fill="#107c41"/><text x="6.4" y="14.6" text-anchor="middle" font-size="10.4" font-weight="bold" fill="#fff">X</text></svg>
  <!-- paint -->
  <svg class="abs" style="left:696px;top:7px" width="26" height="25" viewBox="0 0 26 25"><path d="M12 5C5.6 5 1 9.6 1 14C1 18.6 5 21.6 9.6 21.6C12 21.6 12.4 19.8 14.4 19.4C17.6 18.8 22.6 17.6 22.6 11.6C22.6 7.6 18 5 12 5Z" fill="#e3f0fb" stroke="#5b9fda" stroke-width="1"/><circle cx="5.6" cy="13.4" r="2.1" fill="#e5493a"/><circle cx="9.4" cy="9.4" r="2.1" fill="#67bf4a"/><circle cx="14.6" cy="8" r="2.1" fill="#f4b712"/><ellipse cx="12.4" cy="15" rx="1.8" ry="1.5" fill="#fff" stroke="#8ab8e2" stroke-width=".7"/><path d="M21.6 3.8L13.4 23.4L12 23L19.6 3.2Z" fill="#de8a2e"/><path d="M19 4L20.2 .6Q22.6 .4 23.6 2.2L22 5.2Z" fill="#d8b18a"/></svg>
  <!-- winrar -->
  <svg class="abs" style="left:745px;top:10.6px" width="25" height="20" viewBox="0 0 25 20"><path d="M1 3.4L5 .4H22L24.6 3.4V18.4L22 19.4H4L1 17.8Z" fill="#4a2f1e"/><path d="M2.4 4.6H23.6V8.2H2.4Z" fill="#b653bd"/><path d="M4.6 1.2H21.6L23.6 3.6H2.4Z" fill="#8a3f92"/><path d="M2.4 10H23.6V13.4H2.4Z" fill="#1f30d6"/><path d="M2.4 15H23.6V18H2.4Z" fill="#12c322"/><path d="M14.4 .4H17L17.6 19.4H14.8Z" fill="#c9a24a"/><rect x="14.4" y="8.4" width="3.4" height="4" fill="#8e8e8e" stroke="#3a3a3a" stroke-width=".5"/><path d="M1 9H24.6M1 14.2H24.6" stroke="#3a2417" stroke-width="1"/></svg>
  <!-- chrome T -->
  <svg class="abs" style="left:795px;top:8px" width="27" height="26" viewBox="0 0 27 26" font-family="'Liberation Sans',sans-serif"><circle cx="11.2" cy="11" r="10.6" fill="#fbc116"/><path d="M11.2 11L2 5.7A10.6 10.6 0 0 1 20.4 5.7Z" fill="#dd4b3e"/><path d="M2 5.7A10.6 10.6 0 0 0 10.8 21.6L15.4 13.6L11.2 11Z" fill="#1da362"/><path d="M11.2 6.2H20.6A10.6 10.6 0 0 0 2 5.7L6.6 9Z" fill="#dd4b3e"/><circle cx="11.2" cy="11" r="5" fill="#f4f4f4"/><circle cx="11.2" cy="11" r="4" fill="#4a8af4"/><circle cx="18" cy="18" r="7.9" fill="#8123a8"/><text x="18" y="21.2" text-anchor="middle" font-size="8.6" fill="#fff">T</text></svg>
  <!-- photos -->
  <svg class="abs" style="left:845px;top:8.8px" width="22" height="22" viewBox="0 0 22 22"><rect width="22" height="22" rx="1" fill="#2ba3e8"/><path d="M0 22V14L6.6 8L14 15L22 22Z" fill="#173f86"/><path d="M10 11.4L14.4 9L22 15.4V22H21Z" fill="#4f74d3"/><path d="M0 14L6.6 8L22 22H0Z" fill="#1b4890"/><circle cx="15" cy="5" r="1.9" fill="#fff"/></svg>
  <!-- adobe connect -->
  <svg class="abs" style="left:894px;top:9px" width="21" height="21" viewBox="0 0 14 14"><rect width="14" height="14" rx="2.6" fill="#05251e"/><rect x="2.7" y="2.9" width="3.7" height="3.5" rx=".5" fill="#5fdcb3"/><rect x="7.6" y="2.9" width="3.7" height="3.5" rx=".5" fill="#74e6c1"/><rect x="2.7" y="7.6" width="3.7" height="3.5" rx=".5" fill="#4fd9ad"/><rect x="7.6" y="7.6" width="3.7" height="3.5" rx=".5" fill="#5fdcb3"/><path d="M3 3.4L7 7L11 3.4M7 7L11 10.8M7 7Q5.2 8.8 4 10.6" stroke="#05251e" stroke-width=".9" fill="none"/><path d="M4.2 4.6L7 7L9.8 4.6M7 7L9.6 9.4" stroke="#c7f0e0" stroke-width=".35" fill="none"/></svg>
  <!-- underlines -->
  <div class="ul" style="left:297px;width:40px"><i></i></div>
  <div class="ul" style="left:542px;width:40px"><i></i></div>
  <div class="ul" style="left:640px;width:40px"><i></i></div>
  <div class="ul" style="left:689px;width:40px"></div>
  <div class="ul" style="left:738px;width:40px"><i></i></div>
  <div class="ul" style="left:787px;width:40px"><i></i></div>
  <div class="ul" style="left:836px;width:40px"><i></i></div>
  <div class="ul" style="left:881px;width:48px"></div>
  <svg class="abs" style="left:1073px;top:16px" width="12" height="8" viewBox="0 0 12 8"><path d="M.5 7L6 1.2L11.5 7" fill="none" stroke="#000" stroke-width="1.2"/></svg>
  <svg class="abs" style="left:1095px;top:12px" width="16" height="16" viewBox="0 0 16 16" font-family="'Liberation Sans',sans-serif"><rect x="1" y="1" width="12.6" height="12.4" rx="4" fill="#f4fbfb" stroke="#1b98a6" stroke-width="2"/><text x="7.2" y="10.8" text-anchor="middle" font-size="11" font-weight="bold" fill="#1b98a6">e</text><path d="M11.6 9.2L15.2 15H8Z" fill="#e6353b"/><path d="M11.6 11V13M11.6 13.6V14.4" stroke="#fff" stroke-width=".9"/></svg>
  <svg class="abs" style="left:1120px;top:11px" width="14" height="18" viewBox="0 0 14 18"><rect x="2" y="5.6" width="7.2" height="6.6" rx="1.4" fill="none" stroke="#000" stroke-width="1.2"/><path d="M9.4 8.2L12.6 6.2V11.8L9.4 9.8" fill="none" stroke="#000" stroke-width="1.1"/><path d="M2.6 3.2Q6.4 .2 10.4 3.2M2.6 14.8Q6.4 17.8 10.4 14.8" fill="none" stroke="#000" stroke-width="1.1"/></svg>
  <svg class="abs" style="left:1142px;top:15px" width="18" height="10" viewBox="0 0 18 10"><path d="M1.8 0V2.4M4 0V2.4" stroke="#000" stroke-width="1"/><path d="M.6 2.4H5.2V4.2Q5.2 6 2.9 6Q.6 6 .6 4.2Z" fill="#000"/><path d="M2.9 6V9H6" fill="none" stroke="#000" stroke-width="1"/><rect x="4.8" y="1.7" width="11" height="7.2" fill="#d8dfea" stroke="#000" stroke-width=".9"/><rect x="6.4" y="3.2" width="7.8" height="4.2" fill="#000"/><rect x="16.4" y="3.6" width="1.4" height="3.4" fill="#000"/></svg>
  <svg class="abs" style="left:1166px;top:13px" width="18" height="14" viewBox="0 0 18 14"><path d="M1 4.6H3.6L7 1.2V12.8L3.6 9.4H1Z" fill="none" stroke="#000" stroke-width="1.1"/><path d="M9.2 4.6Q10.8 7 9.2 9.4" fill="none" stroke="#000" stroke-width="1"/><path d="M11.4 2.8Q14.2 7 11.4 11.2" fill="none" stroke="#6c6c6c" stroke-width="1"/><path d="M13.8 1Q17.6 7 13.8 13" fill="none" stroke="#9a9a9a" stroke-width="1"/></svg>
  <svg class="abs" style="left:1193px;top:14px" width="14" height="14" viewBox="0 0 14 14"><path d="M.8 13A12.4 12.4 0 0 1 13 1.2" fill="none" stroke="#8a8a8a" stroke-width="1"/><path d="M4.6 13A8.6 8.6 0 0 1 13 4.8" fill="none" stroke="#555" stroke-width="1.1"/><path d="M8 13A5 5 0 0 1 13 8.2" fill="none" stroke="#222" stroke-width="1.2"/><circle cx="12" cy="11.8" r="1.5" fill="#000"/></svg>
  <span id="tur" class="t" style="left:1219px;top:14px;font-size:12.4px;color:#000;transform:scaleX(.79)">TUR</span>
  <span id="clk" class="t" style="left:1266px;top:5px;font-size:12.4px;color:#000;transform:scaleX(.86)">14:49</span>
  <span id="dat" class="t" style="left:1253px;top:23px;font-size:12.4px;color:#000;transform:scaleX(.865)">21.12.2020</span>
  <svg class="abs" style="left:1325px;top:12px" width="16" height="16" viewBox="0 0 16 16"><path d="M0 .4H16V12H10.6L8 15.4L5.4 12H0Z" fill="#000"/><path d="M3.2 3.6H12.8M3.2 6.2H12.8M3.2 8.8H9.6" stroke="#dfe6ee" stroke-width="1"/></svg>
  <div class="abs" style="left:1361px;top:0;width:1px;height:40px;background:#9aa5b0"></div>

</div>
</body>
</html>
